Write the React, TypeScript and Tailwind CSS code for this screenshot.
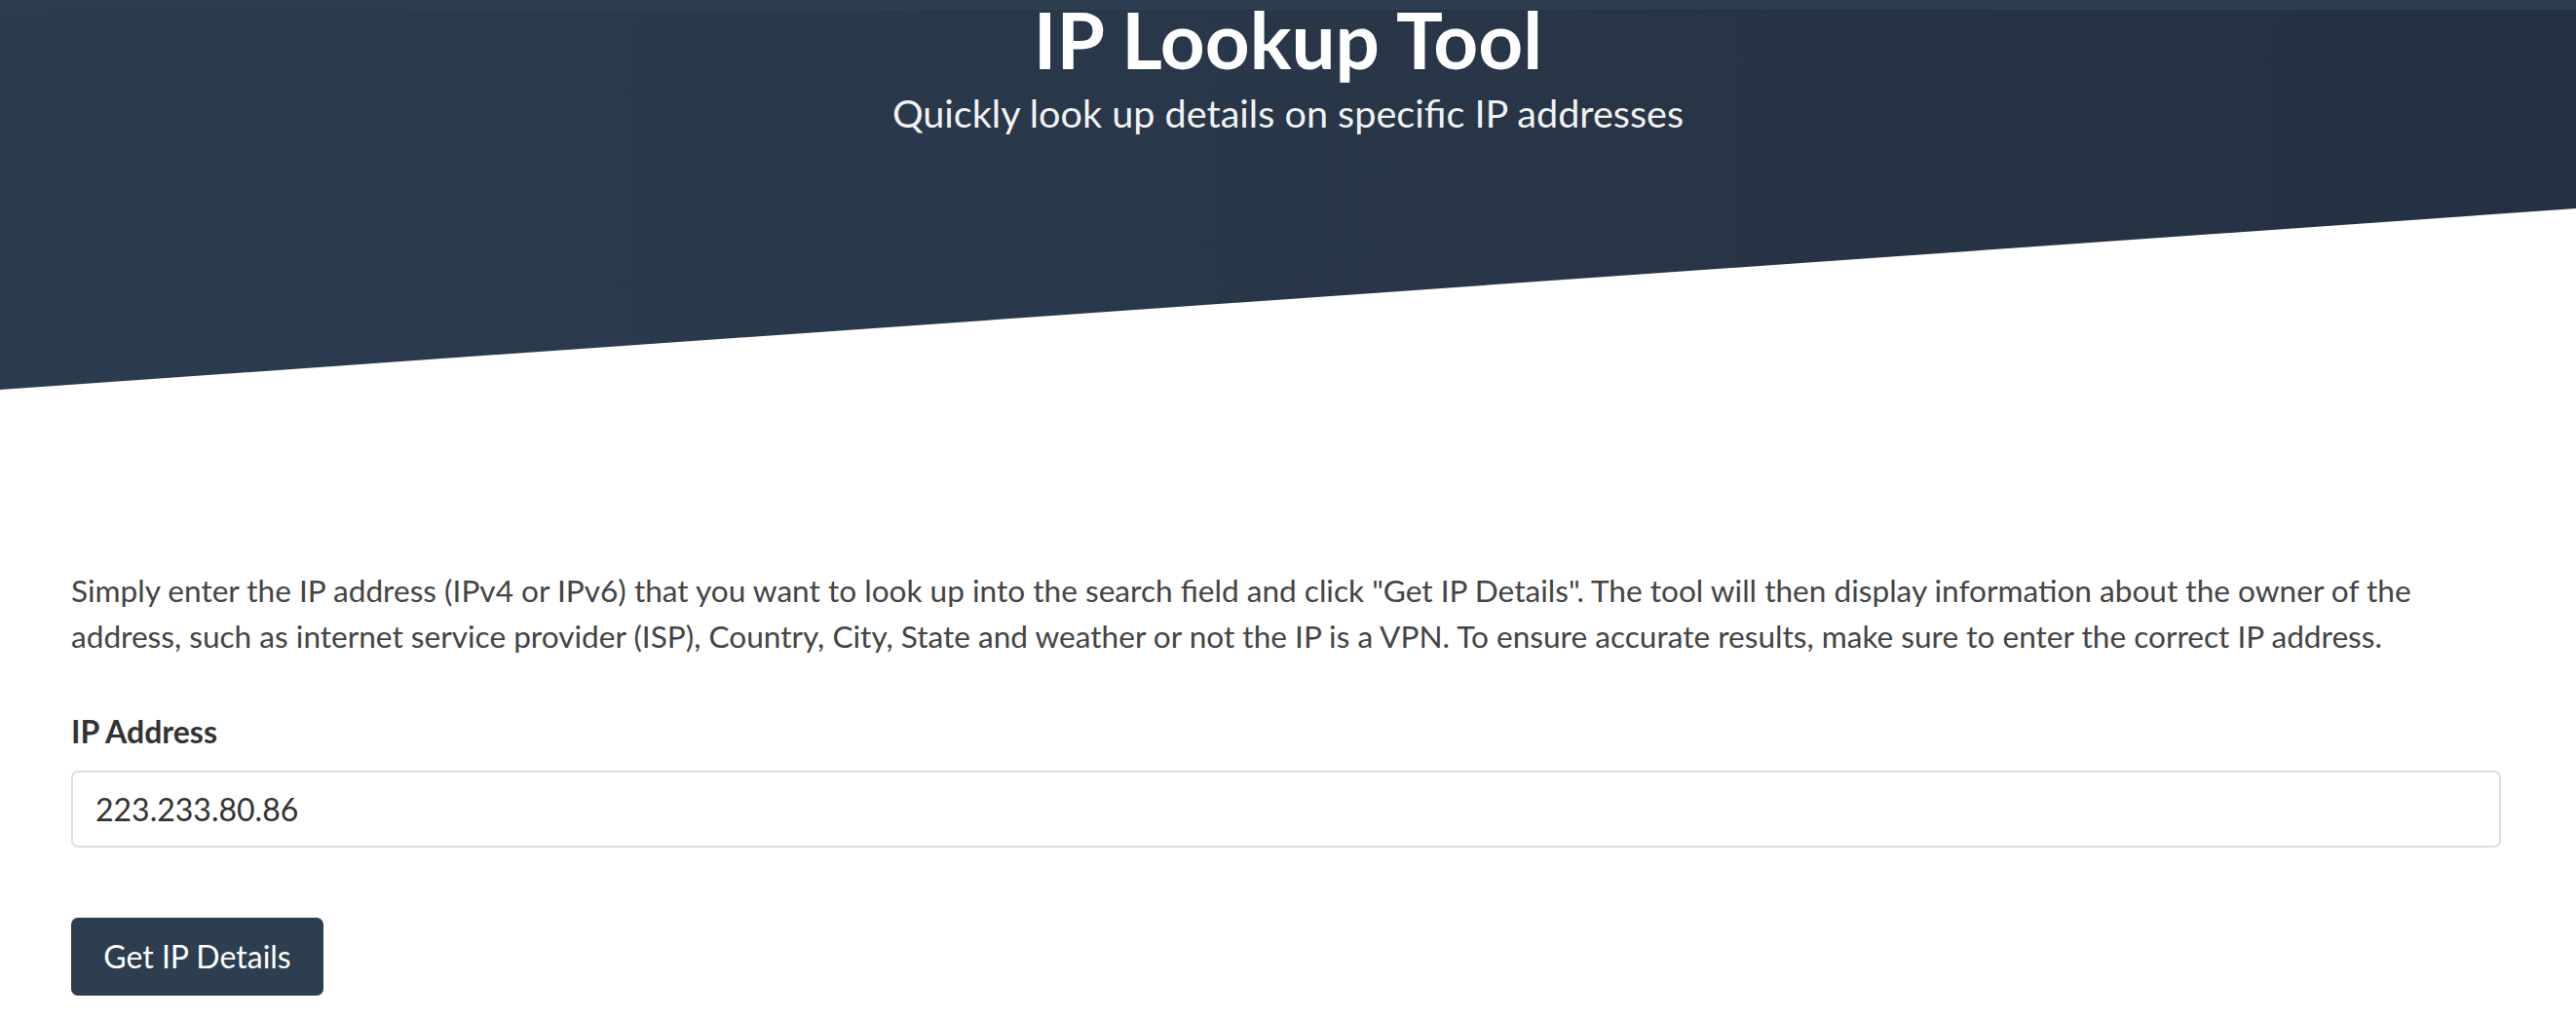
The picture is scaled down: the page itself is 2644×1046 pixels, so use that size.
import React from "react";

export default function App() {
  return (
    <div className="min-h-[1046px] bg-white" style={{ fontFamily: "Lato, 'Noto Sans', sans-serif" }}>
      <header className="h-[400px] bg-linear-to-r from-[#2c3c4f] to-[#243142] [clip-path:polygon(0_0,100%_0,100%_214px,0_100%)]">
        <div className="h-[10px] bg-[#2d3e51]" />
        <h1 className="-mt-[10px] text-center text-[80px] font-bold leading-none text-white">IP Lookup Tool</h1>
        <p className="mt-[16px] text-center text-[39.6px] leading-none text-[#f2f2f2]">Quickly look up details on specific IP addresses</p>
      </header>
      <main className="pl-[73px] pr-[77px]">
        <p className="mt-[183px] text-[31.6px] leading-[47px] text-[#444444]">
          Simply enter the IP address (IPv4 or IPv6) that you want to look up into the search field and click "Get IP Details". The tool will then display information about the owner of the address, such as internet service provider (ISP), Country, City, State and weather or not the IP is a VPN. To ensure accurate results, make sure to enter the correct IP address.
        </p>
        <label className="mt-[51px] block text-[32px] font-bold leading-[45px] text-[#333333]">IP Address</label>
        <div className="mt-[18px] flex h-[79px] items-center rounded-[7px] border-2 border-[#dddddd] bg-white px-[23px]">
          <span className="text-[32px] text-[#333333]">223.233.80.86</span>
        </div>
        <button className="mt-[72px] flex h-[80px] w-[259px] items-center justify-center rounded-[7px] bg-[#2c3e50] text-[32px] text-white">
          Get IP Details
        </button>
      </main>
    </div>
  );
}
